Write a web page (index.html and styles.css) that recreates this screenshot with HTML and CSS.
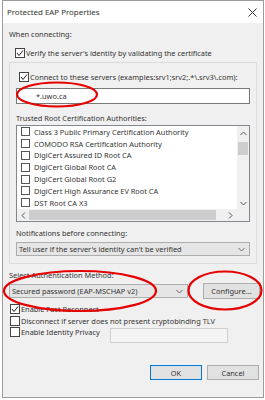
FILE: index.html
```html
<!DOCTYPE html>
<html lang="en">
<head>
  <meta charset="UTF-8" />
  <title>Protected EAP Properties</title>
  <link rel="stylesheet" href="styles.css">
</head>
<body>

  <div class="dialog">
    <!-- Title bar -->
    <div class="title-bar">
      <span class="title">Protected EAP Properties</span>
      <svg class="close" width="9" height="9" viewBox="0 0 9 9"><path d="M0.5 0.5 L8.5 8.5 M8.5 0.5 L0.5 8.5" stroke="#333" stroke-width="1"/></svg>
    </div>

    <div class="dialog-body">
      <div class="label">When connecting:</div>

      <div class="check-row verify-row">
        <span class="box"><svg width="8" height="8" viewBox="0 0 8 8"><path d="M1 4 L3 6.5 L7 1.5" fill="none" stroke="#222" stroke-width="1"/></svg></span>
        Verify the server's identity by validating the certificate
      </div>

      <!-- Server validation panel -->
      <div class="server-panel">
        <div class="check-row connect-row">
          <span class="box"><svg width="8" height="8" viewBox="0 0 8 8"><path d="M1 4 L3 6.5 L7 1.5" fill="none" stroke="#222" stroke-width="1"/></svg></span>
          Connect to these servers (examples:srv1;srv2;.*\.srv3\.com):
        </div>
        <div class="text-input servers">*.uwo.ca</div>

        <div class="label trusted-label">Trusted Root Certification Authorities:</div>
        <div class="cert-list">
          <div class="cert-rows">
            <div class="cert-item"><span class="box"></span>Class 3 Public Primary Certification Authority</div>
            <div class="cert-item"><span class="box"></span>COMODO RSA Certification Authority</div>
            <div class="cert-item"><span class="box"></span>DigiCert Assured ID Root CA</div>
            <div class="cert-item"><span class="box"></span>DigiCert Global Root CA</div>
            <div class="cert-item"><span class="box"></span>DigiCert Global Root G2</div>
            <div class="cert-item"><span class="box"></span>DigiCert High Assurance EV Root CA</div>
            <div class="cert-item"><span class="box"></span>DST Root CA X3</div>
          </div>
          <div class="v-scroll">
            <svg width="7" height="5" viewBox="0 0 7 5"><path d="M0.5 4 L3.5 1 L6.5 4" fill="none" stroke="#555" stroke-width="1"/></svg>
            <div class="v-thumb"></div>
            <div class="v-space"></div>
            <svg width="7" height="5" viewBox="0 0 7 5"><path d="M0.5 1 L3.5 4 L6.5 1" fill="none" stroke="#555" stroke-width="1"/></svg>
          </div>
          <div class="h-scroll">
            <svg width="5" height="7" viewBox="0 0 5 7"><path d="M4 0.5 L1 3.5 L4 6.5" fill="none" stroke="#555" stroke-width="1"/></svg>
            <div class="h-thumb"></div>
            <svg width="5" height="7" viewBox="0 0 5 7"><path d="M1 0.5 L4 3.5 L1 6.5" fill="none" stroke="#555" stroke-width="1"/></svg>
          </div>
          <div class="corner"></div>
        </div>

        <div class="label notify-label">Notifications before connecting:</div>
        <div class="dropdown notify">
          <span>Tell user if the server's identity can't be verified</span>
          <svg width="7" height="5" viewBox="0 0 7 5"><path d="M0.5 1 L3.5 4 L6.5 1" fill="none" stroke="#666" stroke-width="1"/></svg>
        </div>
      </div>

      <div class="label method-label">Select Authentication Method:</div>
      <div class="method-row">
        <div class="dropdown method">
          <span>Secured password (EAP-MSCHAP v2)</span>
          <svg width="7" height="5" viewBox="0 0 7 5"><path d="M0.5 1 L3.5 4 L6.5 1" fill="none" stroke="#666" stroke-width="1"/></svg>
        </div>
        <div class="button configure">Configure...</div>
      </div>

      <div class="options">
        <div class="check-row">
          <span class="box"><svg width="8" height="8" viewBox="0 0 8 8"><path d="M1 4 L3 6.5 L7 1.5" fill="none" stroke="#222" stroke-width="1"/></svg></span>
          Enable Fast Reconnect
        </div>
        <div class="check-row">
          <span class="box"></span>
          Disconnect if server does not present cryptobinding TLV
        </div>
        <div class="check-row identity-row">
          <span class="box"></span>
          <span class="identity-text">Enable Identity Privacy</span>
          <div class="text-input disabled"></div>
        </div>
      </div>

      <div class="footer">
        <div class="button ok">OK</div>
        <div class="button">Cancel</div>
      </div>
    </div>
  </div>

  <!-- Red annotation circles drawn over the screenshot -->
  <svg class="marks" width="265" height="400" viewBox="0 0 265 400">
    <ellipse cx="57" cy="94.5" rx="40" ry="12" fill="none" stroke="#e60000" stroke-width="2.2"/>
    <ellipse cx="80" cy="291" rx="76" ry="20" fill="none" stroke="#e60000" stroke-width="2.2"/>
    <ellipse cx="225" cy="290.5" rx="36.5" ry="19" fill="none" stroke="#e60000" stroke-width="2.2"/>
  </svg>

</body>
</html>
```

FILE: styles.css
```css
* {
  box-sizing: border-box;
  margin: 0;
  padding: 0;
}

body {
  font-family: 'Noto Sans', sans-serif;
  font-size: 7.4px;
  color: #333;
  background: #fff;
  width: 265px;
  height: 400px;
  position: relative;
  overflow: hidden;
}

/* Window frame */
.dialog {
  width: 262px;
  height: 398px;
  margin-left: 2px;
  border: 1px solid #9c9c9c;
  display: flex;
  flex-direction: column;
}

.title-bar {
  height: 22px;
  background: #fff;
  display: flex;
  align-items: center;
  justify-content: space-between;
  padding: 0 6px 0 4px;
}

.title {
  font-size: 7.9px;
  color: #333;
}

.dialog-body {
  flex: 1;
  background: #f0f0f0;
  padding: 6px 6px 0 6px;
  display: flex;
  flex-direction: column;
}

.label {
  height: 10px;
  line-height: 10px;
  white-space: nowrap;
}

/* Checkboxes */
.check-row {
  height: 10px;
  display: flex;
  align-items: center;
  white-space: nowrap;
}

.box {
  width: 10px;
  height: 10px;
  border: 1px solid #444;
  background: #fff;
  display: inline-flex;
  align-items: center;
  justify-content: center;
  margin-right: 1px;
  flex-shrink: 0;
}

.verify-row {
  margin-top: 9px;
  margin-left: 6px;
}

/* Server panel */
.server-panel {
  margin-top: 4px;
  border: 1px solid #dcdcdc;
  padding: 0 6px 7px 6px;
  display: flex;
  flex-direction: column;
}

.connect-row {
  margin-top: 9px;
  margin-left: 3px;
}

.text-input {
  background: #fff;
  border: 1px solid #7a7a7a;
}

.servers {
  margin-top: 6px;
  height: 16px;
  line-height: 14px;
  padding-left: 19px;
}

.trusted-label {
  margin-top: 9px;
}

/* Certificate list */
.cert-list {
  margin-top: 2px;
  height: 97px;
  border: 1px solid #828790;
  background: #fff;
  display: grid;
  grid-template-columns: 1fr 12px;
  grid-template-rows: 1fr 12px;
}

.cert-rows {
  overflow: hidden;
  padding-left: 4px;
}

.cert-item {
  height: 11.8px;
  display: flex;
  align-items: center;
  white-space: nowrap;
}

.cert-item .box {
  width: 9px;
  height: 9px;
  margin-right: 4px;
  border-color: #555;
}

.v-scroll {
  background: #f0f0f0;
  display: flex;
  flex-direction: column;
  align-items: center;
  padding: 5px 0 3px;
}

.v-thumb {
  width: 10px;
  height: 13px;
  background: #cdcdcd;
  margin-top: 6px;
}

.v-space {
  flex: 1;
}

.h-scroll {
  background: #f0f0f0;
  display: flex;
  align-items: center;
  padding: 0 4px;
}

.h-thumb {
  width: 187px;
  height: 10px;
  background: #cdcdcd;
  margin: 0 auto 0 3px;
}

.corner {
  background: #f0f0f0;
}

.notify-label {
  margin-top: 6px;
}

/* Dropdowns and buttons */
.dropdown {
  height: 14px;
  background: #e5e5e5;
  border: 1px solid #adadad;
  display: flex;
  align-items: center;
  justify-content: space-between;
  padding: 0 4px 0 2px;
  white-space: nowrap;
}

.notify {
  margin-top: 4px;
}

.method-label {
  margin-top: 6px;
}

.method-row {
  margin-top: 3px;
  margin-right: -3px;
  display: flex;
  align-items: center;
  justify-content: space-between;
}

.method {
  width: 179px;
}

.button {
  height: 16px;
  background: #e1e1e1;
  border: 1px solid #adadad;
  display: flex;
  align-items: center;
  justify-content: center;
}

.configure {
  width: 57px;
}

.options {
  margin-top: 5px;
  display: flex;
  flex-direction: column;
  gap: 1.5px;
}

.options .check-row {
  margin-left: 1px;
}

.identity-row .identity-text {
  width: 89px;
}

.text-input.disabled {
  width: 118px;
  height: 15px;
  background: #f4f4f4;
  border-color: #cfcfcf;
  margin-top: 6px;
}

.footer {
  margin-top: 28px;
  margin-right: -2px;
  display: flex;
  justify-content: flex-end;
  gap: 5px;
}

.footer .button {
  width: 52px;
  height: 15px;
}

.footer .ok {
  border-color: #0078d7;
}

/* Annotation overlay */
.marks {
  position: absolute;
  left: 0;
  top: 0;
  pointer-events: none;
}
```
